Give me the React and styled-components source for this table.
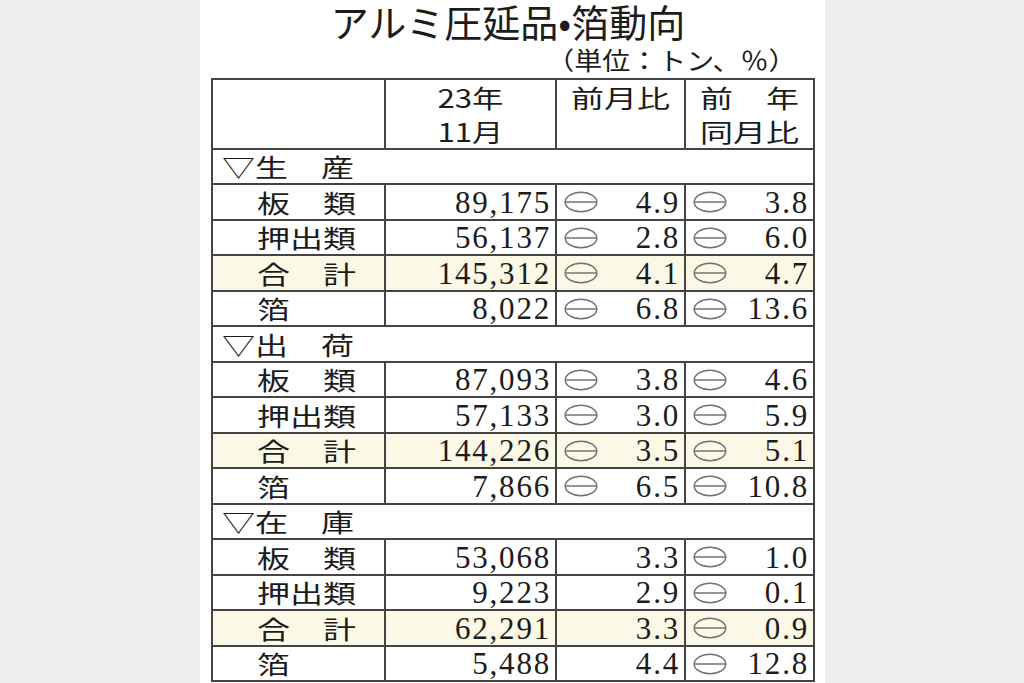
import React from 'react';
import styled, { createGlobalStyle } from 'styled-components';

const GlobalStyle = createGlobalStyle`
  html, body {
    margin: 0;
    padding: 0;
    background: #efefef;
  }
  body {
    font-family: "Noto Sans CJK JP", "Noto Sans", sans-serif;
    color: #1c1c1c;
  }
`;

const Page = styled.div`
  width: 625px;
  min-height: 683px;
  margin-left: 200px;
  padding: 0 12px 0 11px;
  box-sizing: border-box;
  background: #fff;
`;

const Title = styled.h1`
  margin: 0;
  height: 46px;
  padding: 1px 8px 0 0;
  box-sizing: border-box;
  font-size: 38px;
  font-weight: 400;
  line-height: 40px;
  text-align: center;
`;

const Unit = styled.div`
  height: 32px;
  font-size: 25px;
  line-height: 26px;
  text-align: right;
  padding-right: 16px;
`;

// newspaper style flattened type
const Flat = styled.span`
  display: inline-block;
  white-space: pre;
  transform: scaleX(${(p) => p.$sx || 1.32});
  transform-origin: ${(p) => p.$origin || 'left'} center;
`;

const Table = styled.table`
  width: 602px;
  border-collapse: collapse;
  table-layout: fixed;
  border: 2px solid #444;
`;

const Head = styled.th`
  width: ${(p) => p.$w}px;
  height: 68px;
  padding: 0;
  border: 2px solid #444;
  vertical-align: top;
  font-size: 25px;
  font-weight: 400;
  line-height: 34px;
  text-align: center;
`;

const Row = styled.tr`
  height: ${(p) => (p.$tall ? 36 : 35)}px;
  background: ${(p) => (p.$total ? '#fcf8e6' : '#fff')};
`;

const Section = styled.td`
  padding: 0 0 0 ${(p) => (p.$item ? 44 : 9)}px;
  border: 2px solid #444;
  font-size: 25px;
  line-height: 1;
  vertical-align: middle;
`;

const Num = styled.td`
  padding: 0 4px 0 0;
  border: 2px solid #444;
  font-family: "Liberation Serif", "Times New Roman", serif;
  font-size: 31px;
  letter-spacing: 1.8px;
  line-height: 1;
  text-align: right;
  vertical-align: middle;
`;

const PctBox = styled.div`
  display: flex;
  align-items: center;
  justify-content: space-between;
  padding: 0 0 0 7px;
`;

const Minus = ({ show }) =>
  show ? (
    <svg width="34" height="22" viewBox="0 0 34 22" aria-label="マイナス">
      <ellipse cx="17" cy="11" rx="15.8" ry="9.8" fill="none" stroke="#737373" strokeWidth="1.5" />
      <line x1="1.2" y1="11" x2="32.8" y2="11" stroke="#737373" strokeWidth="1.5" />
    </svg>
  ) : (
    <span />
  );

const Pct = ({ v }) => {
  const neg = v.startsWith('-');
  return (
    <Num>
      <PctBox>
        <Minus show={neg} />
        <span>{neg ? v.slice(1) : v}</span>
      </PctBox>
    </Num>
  );
};

const data = [
  {
    name: '▽生　産',
    rows: [
      ['板　類', '89,175', '-4.9', '-3.8'],
      ['押出類', '56,137', '-2.8', '-6.0'],
      ['合　計', '145,312', '-4.1', '-4.7'],
      ['箔', '8,022', '-6.8', '-13.6'],
    ],
  },
  {
    name: '▽出　荷',
    rows: [
      ['板　類', '87,093', '-3.8', '-4.6'],
      ['押出類', '57,133', '-3.0', '-5.9'],
      ['合　計', '144,226', '-3.5', '-5.1'],
      ['箔', '7,866', '-6.5', '-10.8'],
    ],
  },
  {
    name: '▽在　庫',
    rows: [
      ['板　類', '53,068', '3.3', '-1.0'],
      ['押出類', '9,223', '2.9', '-0.1'],
      ['合　計', '62,291', '3.3', '-0.9'],
      ['箔', '5,488', '4.4', '-12.8'],
    ],
  },
];

export default function App() {
  return (
    <Page>
      <GlobalStyle />
      <Title>アルミ圧延品•箔動向</Title>
      <Unit>
        <Flat $sx={1.12} $origin="right">（単位：トン、％）</Flat>
      </Unit>
      <Table>
        <thead>
          <tr>
            <Head $w={171} />
            <Head $w={169}>
              <Flat $origin="center" $sx={1.25}>23年</Flat>
              <br />
              <Flat $origin="center" $sx={1.25}>11月</Flat>
            </Head>
            <Head $w={127}>
              <Flat $origin="center">前月比</Flat>
            </Head>
            <Head $w={127}>
              <Flat $origin="center">前　年</Flat>
              <br />
              <Flat $origin="center">同月比</Flat>
            </Head>
          </tr>
        </thead>
        <tbody>
          {data.map((sec, si) => (
            <React.Fragment key={sec.name}>
              <Row $tall={(si * 5) % 2 === 1}>
                <Section colSpan={4}>
                  <Flat>{sec.name}</Flat>
                </Section>
              </Row>
              {sec.rows.map(([label, qty, mom, yoy], ri) => (
                <Row
                  key={label}
                  $tall={(si * 5 + ri + 1) % 2 === 1}
                  $total={label === '合　計'}
                >
                  <Section $item>
                    <Flat>{label}</Flat>
                  </Section>
                  <Num>{qty}</Num>
                  <Pct v={mom} />
                  <Pct v={yoy} />
                </Row>
              ))}
            </React.Fragment>
          ))}
        </tbody>
      </Table>
    </Page>
  );
}
